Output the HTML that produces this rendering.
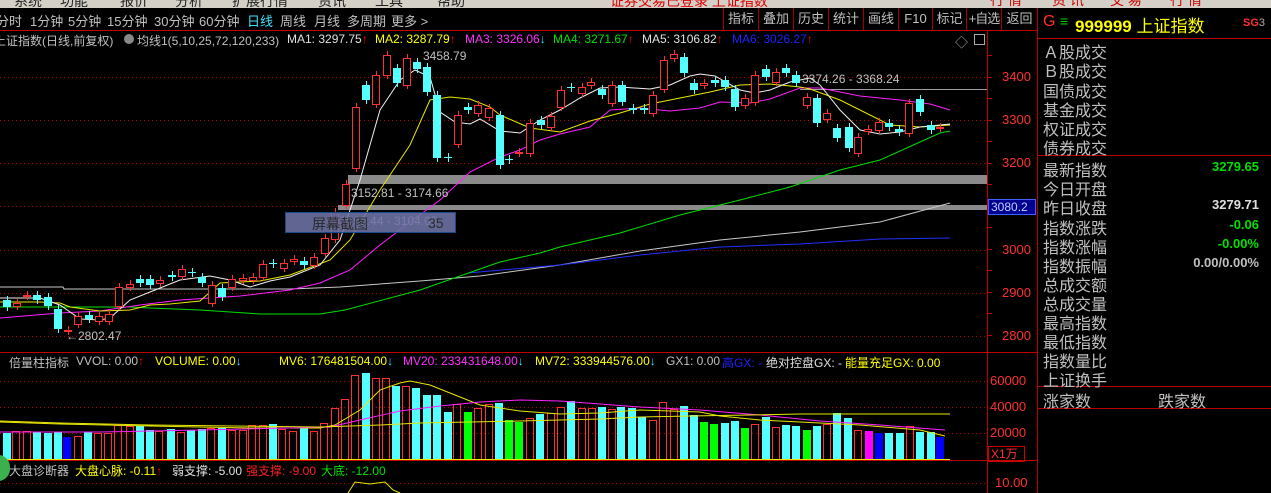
<!DOCTYPE html>
<html><head><meta charset="utf-8">
<style>
*{margin:0;padding:0;box-sizing:border-box}
body{width:1271px;height:493px;background:#000;overflow:hidden;position:relative;font-family:"Liberation Sans","Noto Sans CJK SC",sans-serif;color:#c0c0c0}
.a{position:absolute;white-space:nowrap}
.menu{position:absolute;left:0;top:0;width:1271px;height:8px;background:#d4d0c8;overflow:hidden}
.menu span{position:absolute;top:-9px;font-size:14px;color:#222}
.tb{font-size:13px;top:11px}
.rb{position:absolute;top:8px;height:22px;border-left:1px solid #a00000;font-size:13px;line-height:22px;text-align:center;color:#c0c0c0}
.lg{font-size:12px;top:32px}
.rp{position:absolute;left:1043px;font-size:16px;color:#c0c0c0}
.rv{position:absolute;right:12px;font-size:13px;font-weight:bold}
.ax{position:absolute;font-size:13px;color:#ff3030;right:240px}
</style></head><body>
<div class="menu"><span style="left:14px">系统</span><span style="left:60px">功能</span><span style="left:120px">报价</span><span style="left:175px">分析</span><span style="left:232px">扩展行情</span><span style="left:318px">资讯</span><span style="left:375px">工具</span><span style="left:437px">帮助</span><span style="left:610px;color:#d00">证券交易已登录 上证指数</span>
<span style="left:990px;top:-10px;color:#c00">行 情</span><span style="left:1052px;top:-10px;color:#c00">资 讯</span><span style="left:1110px;top:-10px;color:#c00">交 易</span><span style="left:1170px;top:-10px;color:#c00">行 情</span></div>
<div style="position:absolute;left:0;top:30px;width:1037px;height:1px;background:#c00000"></div>
<div class="a tb" style="left:-4px">分时</div><div class="a tb" style="left:30px">1分钟</div><div class="a tb" style="left:68px">5分钟</div><div class="a tb" style="left:107px">15分钟</div><div class="a tb" style="left:154px">30分钟</div><div class="a tb" style="left:199px">60分钟</div><div class="a tb" style="left:247px;color:#40e0ff">日线</div><div class="a tb" style="left:280px">周线</div><div class="a tb" style="left:314px">月线</div><div class="a tb" style="left:347px">多周期</div><div class="a tb" style="left:391px">更多 &gt;</div>
<div class="rb" style="left:723px;width:35px">指标</div><div class="rb" style="left:758px;width:35px">叠加</div><div class="rb" style="left:793px;width:35px">历史</div><div class="rb" style="left:828px;width:35px">统计</div><div class="rb" style="left:863px;width:35px">画线</div><div class="rb" style="left:898px;width:34px">F10</div><div class="rb" style="left:932px;width:34px">标记</div><div class="rb" style="left:966px;width:35px;letter-spacing:-1px">+自选</div><div class="rb" style="left:1001px;width:36px">返回</div>
<div class="a lg" style="left:-6px">上证指数(日线,前复权)</div>
<div class="a" style="left:124px;top:34px;width:10px;height:10px;border-radius:5px;background:#888"></div>
<div class="a lg" style="left:137px">均线1(5,10,25,72,120,233)</div>
<div class="a lg" style="left:287px;color:#e0e0e0">MA1: 3297.75<span style="color:#f00">↑</span></div>
<div class="a lg" style="left:375px;color:#ffff00">MA2: 3287.79<span style="color:#f00">↑</span></div>
<div class="a lg" style="left:465px;color:#ff30ff">MA3: 3326.06<span style="color:#40e0ff">↓</span></div>
<div class="a lg" style="left:553px;color:#00e000">MA4: 3271.67<span style="color:#f00">↑</span></div>
<div class="a lg" style="left:642px;color:#e0e0e0">MA5: 3106.82<span style="color:#f00">↑</span></div>
<div class="a lg" style="left:732px;color:#2020ff">MA6: 3026.27<span style="color:#f00">↑</span></div>
<div class="a" style="left:955px;top:32px;font-size:13px;color:#aaa">◇</div>
<div class="a" style="left:974px;top:34px;width:11px;height:11px;border:1px solid #aaa"></div>
<svg id="ch" width="1271" height="493" style="position:absolute;left:0;top:0"></svg>
<div class="a" style="left:802px;top:72px;font-size:12px;color:#c0c0c0">3374.26 - 3368.24</div>
<div class="a" style="left:423px;top:49px;font-size:12px;color:#c0c0c0">3458.79</div>
<div class="a" style="left:66px;top:329px;font-size:12px;color:#c0c0c0">←2802.47</div>
<div class="a" style="left:351px;top:186px;font-size:12px;color:#c0c0c0">3152.81 - 3174.66</div>
<div class="a" style="left:340px;top:214px;font-size:12px;color:#c0c0c0">3092.44 - 3104.05</div>
<div class="a" style="left:285px;top:212px;width:171px;height:21px;background:rgba(110,115,165,0.88);border:1px solid #1a4a8a"></div>
<div class="a" style="left:312px;top:214px;font-size:14px;color:#2a2a2a">屏幕截图</div>
<div class="a" style="left:428px;top:215px;font-size:14px;color:#2a2a2a">35</div>
<div class="ax" style="top:69px;left:1002px">3400</div><div class="ax" style="top:112px;left:1002px">3300</div><div class="ax" style="top:155px;left:1002px">3200</div><div class="ax" style="top:242px;left:1002px">3000</div><div class="ax" style="top:285px;left:1002px">2900</div><div class="ax" style="top:328px;left:1002px">2800</div>
<div class="a" style="left:988px;top:199px;width:48px;height:16px;background:#000090;border:1px solid #4060ff;font-size:12px;color:#c0d0ff;line-height:14px;padding-left:2px">3080.2</div>
<div class="ax" style="top:373px;left:990px">60000</div><div class="ax" style="top:399px;left:990px">40000</div><div class="ax" style="top:425px;left:990px">20000</div><div class="ax" style="top:475px;left:995px">10.00</div>
<div class="a" style="left:988px;top:446px;width:37px;height:16px;border:1px solid #c00;font-size:12px;color:#ff3030;padding-left:2px;line-height:14px">X1万</div>
<div class="a" style="left:9px;top:354px;font-size:12px">倍量柱指标</div>
<div class="a" style="left:76px;top:354px;font-size:12px">VVOL: 0.00<span style="color:#f00">↑</span></div>
<div class="a" style="left:155px;top:354px;font-size:12px;color:#ffff00">VOLUME: 0.00<span style="color:#40e0ff">↓</span></div>
<div class="a" style="left:279px;top:354px;font-size:12px;color:#ffff00">MV6: 176481504.00<span style="color:#40e0ff">↓</span></div>
<div class="a" style="left:403px;top:354px;font-size:12px;color:#ff30ff">MV20: 233431648.00<span style="color:#40e0ff">↓</span></div>
<div class="a" style="left:535px;top:354px;font-size:12px;color:#ffff00">MV72: 333944576.00<span style="color:#40e0ff">↓</span></div>
<div class="a" style="left:666px;top:354px;font-size:12px">GX1: 0.00</div>
<div class="a" style="left:722px;top:354px;font-size:12px;color:#2020ff">高GX: -</div>
<div class="a" style="left:766px;top:354px;font-size:12px;color:#e0e0e0">绝对控盘GX: -</div>
<div class="a" style="left:845px;top:354px;font-size:12px;color:#ffff00">能量充足GX: 0.00</div>
<div class="a" style="left:-14px;top:455px;width:24px;height:26px;border-radius:12px;background:#3cb04c"></div>
<div class="a" style="left:9px;top:462px;font-size:12px">大盘诊断器</div>
<div class="a" style="left:75px;top:462px;font-size:12px;color:#ffff00">大盘心脉: -0.11<span style="color:#f00">↑</span></div>
<div class="a" style="left:172px;top:462px;font-size:12px;color:#e0e0e0">弱支撑: -5.00</div>
<div class="a" style="left:246px;top:462px;font-size:12px;color:#ff2020">强支撑: -9.00</div>
<div class="a" style="left:321px;top:462px;font-size:12px;color:#00e000">大底: -12.00</div>
<!-- right panel -->
<div class="a" style="left:1037px;top:8px;width:1px;height:485px;background:#c00000"></div>
<div class="a" style="left:1037px;top:38px;width:234px;height:1px;background:#c00000"></div>
<div class="a" style="left:1037px;top:155px;width:234px;height:1px;background:#c00000"></div>
<div class="a" style="left:1037px;top:386px;width:234px;height:1px;background:#c00000"></div>
<div class="a" style="left:1037px;top:408px;width:234px;height:1px;background:#c00000"></div>
<div class="a" style="left:1043px;top:13px;font-size:16px;color:#ff3030">G</div>
<div class="a" style="left:1060px;top:13px;font-size:14px;color:#00d000">≡</div>
<div class="a" style="left:1075px;top:12px;font-size:17px;color:#ffff00"><b>999999</b> 上证指数</div>
<div class="a" style="left:1243px;top:17px;font-size:11px;color:#ff3030"><b>SG</b><span style="color:#aaa">3</span></div>
<div class="rp" style="top:39px">Ａ股成交</div><div class="rp" style="top:58px">Ｂ股成交</div><div class="rp" style="top:78px">国债成交</div><div class="rp" style="top:97px">基金成交</div><div class="rp" style="top:116px">权证成交</div><div class="rp" style="top:135px">债券成交</div>
<div class="rp" style="top:157px">最新指数</div><div class="rp" style="top:176px">今日开盘</div><div class="rp" style="top:195px">昨日收盘</div><div class="rp" style="top:215px">指数涨跌</div><div class="rp" style="top:234px">指数涨幅</div><div class="rp" style="top:253px">指数振幅</div><div class="rp" style="top:272px">总成交额</div><div class="rp" style="top:291px">总成交量</div><div class="rp" style="top:310px">最高指数</div><div class="rp" style="top:329px">最低指数</div><div class="rp" style="top:348px">指数量比</div><div class="rp" style="top:367px">上证换手</div>
<div class="rv" style="top:159px;color:#00e000">3279.65</div>
<div class="rv" style="top:197px;color:#e0e0e0">3279.71</div>
<div class="rv" style="top:217px;color:#00e000">-0.06</div>
<div class="rv" style="top:236px;color:#00e000">-0.00%</div>
<div class="rv" style="top:255px;color:#c0c0c0">0.00/0.00%</div>
<div class="rp" style="top:388px">涨家数</div><div class="rp" style="top:388px;left:1158px">跌家数</div>
<script>
var s='';
function L(x1,y1,x2,y2,c,w,d){s+='<line x1="'+x1+'" y1="'+y1+'" x2="'+x2+'" y2="'+y2+'" stroke="'+c+'" stroke-width="'+(w||1)+'"'+(d?' stroke-dasharray="'+d+'"':'')+'/>';}
function P(pts,c,w){s+='<polyline fill="none" stroke="'+c+'" stroke-width="'+(w||1)+'" points="'+pts.map(function(p){return p.join(',')}).join(' ')+'"/>';}
[77,120,163,206,250,293,336,381,407,433,483].forEach(function(y){L(0,y+.5,987,y+.5,'#b00000',1,'1,3');});
L(987.5,30,987.5,493,'#c00000');
for(var y=55;y<350;y+=21.5)L(987,Math.round(y)+.5,992,Math.round(y)+.5,'#c00000');
L(0,352.5,1037,352.5,'#c00000');L(0,460.5,1037,460.5,'#c00000');
s+='<rect x="348" y="175" width="639" height="9" fill="#8a8a8a"/><rect x="338" y="205" width="649" height="5" fill="#8a8a8a"/>';
L(800,89.5,987,89.5,'#a0a0a0');
P([[0,287],[63,287],[64,289],[290,289],[340,287],[420,281],[480,276],[560,265],[640,251],[720,240],[800,232],[880,222],[950,203]],'#c8c8c8');
P([[468,273],[560,265],[640,255],[720,247],[800,244],[880,239],[950,238]],'#2030ff');
P([[0,307],[130,307],[150,308],[200,310],[260,314],[320,314],[345,310],[420,290],[500,262],[540,253],[560,247],[620,233],[680,215],[740,200],[790,187],[840,170],[880,160],[940,133],[950,131]],'#00e000');
P([[0,318],[60,313],[100,311],[140,305],[180,300],[240,296],[290,290],[320,283],[350,270],[380,245],[410,222],[440,200],[470,172],[500,157],[520,150],[540,140],[560,134],[590,127],[610,110],[640,108],[670,111],[700,108],[720,102],[750,103],[770,99],[800,88],[820,88],[860,96],[900,100],[930,104],[950,110]],'#ff20ff');
P([[0,302],[40,302],[60,303],[70,307],[100,311],[130,310],[150,305],[170,304],[200,301],[220,283],[260,281],[290,275],[330,260],[350,240],[380,190],[410,145],[430,100],[450,97],[470,99],[490,107],[500,115],[530,128],[560,132],[590,121],[620,113],[650,104],[680,98],[710,92],[740,85],[770,84],[800,87],[810,89],[840,100],[870,115],[890,125],[920,127],[950,125]],'#e8e800');
P([[0,298],[40,298],[60,305],[80,319],[100,320],[110,318],[130,300],[150,292],[180,280],[210,276],[230,280],[250,287],[270,281],[290,277],[320,265],[340,240],[360,180],[380,110],[400,80],[415,70],[430,77],[440,112],[455,122],[470,124],[480,119],[500,131],[520,133],[540,120],[560,110],[580,98],[600,88],[620,87],[650,89],[670,85],[690,76],[700,74],[715,76],[740,90],[755,93],[770,90],[790,82],[810,78],[820,85],[840,110],[860,130],[880,134],[900,132],[920,127],[950,124]],'#f0f0f0');
var C=[[7,300,307,'c'],[17,303,306,'r'],[27,295,296,'r'],[37,295,300,'c'],[48,297,306,'c'],[58,309,329,'c'],[68,330,331,'r'],[78,316,324,'r'],[89,315,319,'c'],[99,316,321,'r'],[109,314,321,'r'],[119,287,306,'r'],[130,284,287,'r'],[140,279,283,'c'],[150,279,285,'c'],[160,280,283,'r'],[172,275,277,'c'],[182,269,276,'r'],[192,272,273,'c'],[202,277,283,'c'],[212,285,303,'r'],[222,288,297,'c'],[232,279,287,'r'],[243,278,280,'r'],[253,277,280,'r'],[263,264,277,'r'],[273,263,264,'c'],[284,263,268,'r'],[294,259,261,'r'],[304,261,265,'c'],[314,257,265,'r'],[325,238,253,'r'],[335,212,239,'r'],[346,184,205,'r'],[356,107,168,'r'],[366,85,100,'c'],[376,75,104,'r'],[387,55,75,'r'],[397,68,83,'c'],[407,58,85,'r'],[417,62,69,'c'],[427,67,92,'c'],[437,95,158,'c'],[448,157,158,'c'],[458,115,144,'r'],[468,107,110,'c'],[478,105,113,'r'],[489,108,117,'r'],[500,115,165,'c'],[509,159,160,'c'],[519,152,153,'r'],[530,123,153,'r'],[541,120,125,'c'],[551,116,127,'r'],[561,90,107,'r'],[571,87,88,'c'],[582,87,93,'r'],[591,82,85,'r'],[602,89,95,'c'],[612,85,103,'r'],[622,85,102,'c'],[633,108,110,'c'],[644,108,110,'c'],[653,95,113,'r'],[664,60,89,'r'],[674,54,58,'r'],[684,57,73,'c'],[694,83,90,'c'],[704,83,85,'r'],[715,80,83,'c'],[725,80,87,'c'],[735,89,107,'c'],[745,98,105,'r'],[755,75,102,'r'],[766,69,77,'c'],[776,72,82,'r'],[786,68,73,'c'],[796,75,83,'c'],[807,97,105,'r'],[817,98,123,'c'],[827,113,119,'r'],[837,128,138,'c'],[849,127,148,'c'],[858,137,153,'r'],[868,129,131,'r'],[879,122,130,'r'],[889,123,127,'c'],[899,129,132,'c'],[909,103,133,'r'],[920,99,112,'c'],[931,125,130,'c'],[940,127,128,'r']];
C.forEach(function(c){var col=c[3]=='r'?'#ff3030':'#54ffff';L(c[0]+.5,c[1]-4,c[0]+.5,c[2]+4,col);
if(c[3]=='r')s+='<rect x="'+(c[0]-3.5)+'" y="'+(c[1]+.5)+'" width="7" height="'+Math.max(1,c[2]-c[1])+'" fill="#000" stroke="'+col+'"/>';
else s+='<rect x="'+(c[0]-4)+'" y="'+c[1]+'" width="8" height="'+Math.max(1,c[2]-c[1])+'" fill="'+col+'"/>';});
var V=[[7,433,'c'],[16,431,'r'],[27,431,'r'],[37,432,'c'],[48,433,'c'],[58,432,'c'],[67,437,'b'],[78,436,'r'],[88,432,'c'],[98,433,'r'],[108,433,'r'],[118,425,'r'],[130,426,'r'],[140,426,'c'],[150,430,'c'],[159,431,'r'],[171,429,'c'],[181,432,'r'],[191,430,'c'],[202,429,'c'],[211,428,'r'],[222,428,'c'],[232,430,'r'],[243,430,'r'],[252,425,'r'],[263,425,'r'],[273,424,'c'],[282,429,'r'],[293,431,'r'],[304,428,'c'],[314,431,'r'],[324,423,'r'],[335,408,'r'],[345,399,'r'],[355,375,'r'],[366,373,'c'],[376,378,'r'],[386,378,'r'],[396,386,'c'],[406,386,'r'],[416,388,'c'],[427,395,'c'],[437,395,'c'],[448,412,'c'],[457,404,'r'],[468,412,'g'],[478,408,'r'],[489,404,'r'],[499,403,'c'],[509,420,'g'],[519,422,'g'],[530,418,'r'],[540,414,'c'],[551,413,'r'],[561,407,'r'],[571,401,'c'],[582,408,'r'],[592,408,'r'],[602,407,'c'],[612,409,'r'],[621,407,'c'],[632,408,'c'],[642,417,'c'],[653,420,'r'],[663,402,'r'],[674,409,'r'],[684,406,'c'],[694,415,'c'],[704,422,'g'],[714,424,'g'],[725,423,'c'],[735,421,'c'],[745,428,'g'],[755,424,'r'],[766,417,'c'],[776,427,'r'],[786,425,'c'],[796,426,'c'],[807,430,'g'],[817,426,'c'],[827,424,'r'],[837,413,'c'],[848,418,'c'],[858,430,'r'],[869,431,'m'],[879,433,'b'],[889,433,'c'],[900,433,'c'],[910,426,'r'],[920,432,'c'],[931,432,'c'],[940,437,'b']];
var VC={c:'#54ffff',g:'#00ff00',b:'#0000ff',m:'#ff00ff'};
V.forEach(function(v){var h=459-v[1];if(v[2]=='r')s+='<rect x="'+(v[0]-3.5)+'" y="'+(v[1]+.5)+'" width="7" height="'+h+'" fill="none" stroke="#ff3030"/>';else s+='<rect x="'+(v[0]-4)+'" y="'+v[1]+'" width="8" height="'+h+'" fill="'+VC[v[2]]+'"/>';});
L(0,459.5,950,459.5,'#e8e800');
P([[0,422],[60,424],[150,426],[250,428],[320,428],[335,425],[360,410],[380,390],[400,383],[410,381],[430,385],[460,397],[480,405],[520,411],[560,414],[600,413],[640,410],[700,412],[720,416],[760,420],[820,423],[860,425],[920,430],[945,436]],'#e8e800');
P([[0,432],[100,432],[200,430],[290,428],[330,427],[360,420],[400,411],[440,406],[480,402],[520,400],[560,401],[600,404],[640,407],[700,410],[760,415],[820,421],[880,425],[945,430]],'#ff20ff');
P([[0,421],[60,423],[150,425],[320,427],[380,425],[420,423],[470,422],[520,421],[600,419],[640,417],[690,416],[750,415],[800,414],[950,414]],'#e8e800');
P([[348,493],[355,482],[370,484],[385,482],[393,490],[400,493]],'#e8e800');
document.getElementById('ch').innerHTML=s;
</script>
</body></html>
